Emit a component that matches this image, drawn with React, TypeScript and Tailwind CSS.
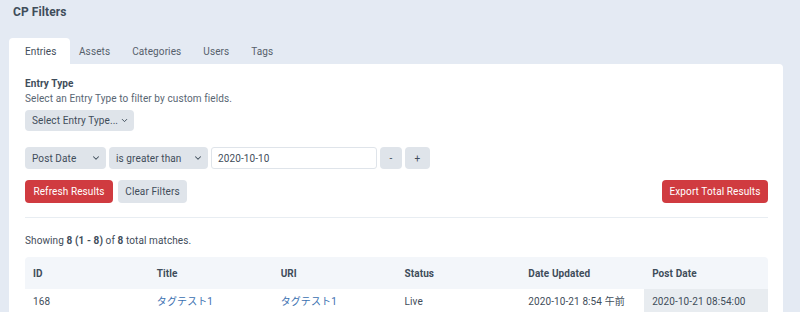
import React from "react";
import { ChevronDown } from "lucide-react";

const tabs = ["Assets", "Categories", "Users", "Tags"];

const columns = ["ID", "Title", "URI", "Status", "Date Updated", "Post Date"];

// One fake row, the table is cut by the window edge anyway
const rows = [
  {
    id: "168",
    title: "タグテスト1",
    uri: "タグテスト1",
    status: "Live",
    updated: "2020-10-21 8:54 午前",
    postDate: "2020-10-21 08:54:00",
  },
];

const SelectBox = ({ label, width }: { label: string; width: string }) => (
  <div
    className={`${width} h-[22px] flex items-center justify-between pl-[7px] pr-[5px] rounded-[4px] bg-[#dfe4ea] text-[#3f4d5a]`}
  >
    <span>{label}</span>
    <ChevronDown size={10} strokeWidth={2.5} className="text-[#3f4d5a]" />
  </div>
);

export default function App() {
  return (
    <div
      className="w-[800px] h-[312px] overflow-hidden bg-[#e4eaf3] text-[10px] tracking-[0.1px] text-[#3f4d5a]"
      style={{ fontFamily: "Roboto, 'Noto Sans CJK JP', sans-serif" }}
    >
      {/* Page header */}
      <div className="h-[38px] px-[13px] pt-[4px]">
        <h1 className="text-[12px] font-bold leading-[16px] text-[#3f4d5a]">CP Filters</h1>
      </div>

      {/* Tabs */}
      <div className="flex h-[26px] pl-[9px]">
        <div className="flex items-center w-[61px] pl-[16px] rounded-t-[4px] bg-white">Entries</div>
        <div className="flex items-center gap-[22px] pl-[9px] text-[#56606b]">
          {tabs.map((t) => (
            <span key={t}>{t}</span>
          ))}
        </div>
      </div>

      {/* Card */}
      <div className="ml-[9px] w-[774px] h-[260px] bg-white rounded-tr-[4px] pl-[16px] pr-[15px] pt-[13px]">
        <div className="font-bold leading-[14px]">Entry Type</div>
        <div className="leading-[14px] mt-[1px] text-[#596673]">
          Select an Entry Type to filter by custom fields.
        </div>
        <div className="mt-[4px]">
          <div className="inline-flex h-[21px] items-center gap-[2px] pl-[7px] pr-[5px] rounded-[4px] bg-[#dfe4ea]">
            <span>Select Entry Type...</span>
            <ChevronDown size={9} strokeWidth={2.5} />
          </div>
        </div>

        {/* Filter row */}
        <div className="flex gap-[3px] mt-[16px]">
          <SelectBox label="Post Date" width="w-[81px]" />
          <SelectBox label="is greater than" width="w-[99px]" />
          <div className="w-[166px] h-[22px] flex items-center px-[6px] rounded-[3px] border border-[#dfe4ea] text-[#3f4d5a]">
            2020-10-10
          </div>
          <div className="w-[22px] h-[22px] flex items-center justify-center rounded-[4px] bg-[#dfe4ea]">-</div>
          <div className="w-[25px] h-[22px] flex items-center justify-center rounded-[4px] bg-[#dfe4ea]">+</div>
        </div>

        {/* Actions */}
        <div className="flex items-center mt-[11px]">
          <div className="h-[23px] w-[88px] flex items-center justify-center rounded-[4px] bg-[#d03b40] text-white">
            Refresh Results
          </div>
          <div className="h-[23px] w-[69px] ml-[5px] flex items-center justify-center rounded-[4px] bg-[#dfe4ea]">
            Clear Filters
          </div>
          <div className="ml-auto h-[23px] w-[106px] flex items-center justify-center rounded-[4px] bg-[#d03b40] text-white">
            Export Total Results
          </div>
        </div>

        <hr className="mt-[14px] border-t border-[#e8edf2]" />

        <div className="mt-[16px] leading-[14px]">
          Showing <b>8 (1 - 8)</b> of <b>8</b> total matches.
        </div>

        {/* Results table */}
        <table className="mt-[9px] w-full table-fixed border-collapse">
          <thead>
            <tr className="bg-[#f3f6fa]">
              {columns.map((c, i) => (
                <th
                  key={c}
                  className={`h-[32px] px-[8px] text-left font-bold ${i === 0 ? "rounded-tl-[4px]" : ""} ${
                    i === columns.length - 1 ? "rounded-tr-[4px]" : ""
                  }`}
                >
                  {c}
                </th>
              ))}
            </tr>
          </thead>
          <tbody>
            {rows.map((r) => (
              <tr key={r.id}>
                <td className="h-[24px] px-[8px]">{r.id}</td>
                <td className="px-[8px] text-[#3a6fb0]">{r.title}</td>
                <td className="px-[8px] text-[#3a6fb0]">{r.uri}</td>
                <td className="px-[8px]">{r.status}</td>
                <td className="px-[8px]">{r.updated}</td>
                <td className="px-[8px] bg-[#e8ecf0]">{r.postDate}</td>
              </tr>
            ))}
          </tbody>
        </table>
      </div>
    </div>
  );
}
